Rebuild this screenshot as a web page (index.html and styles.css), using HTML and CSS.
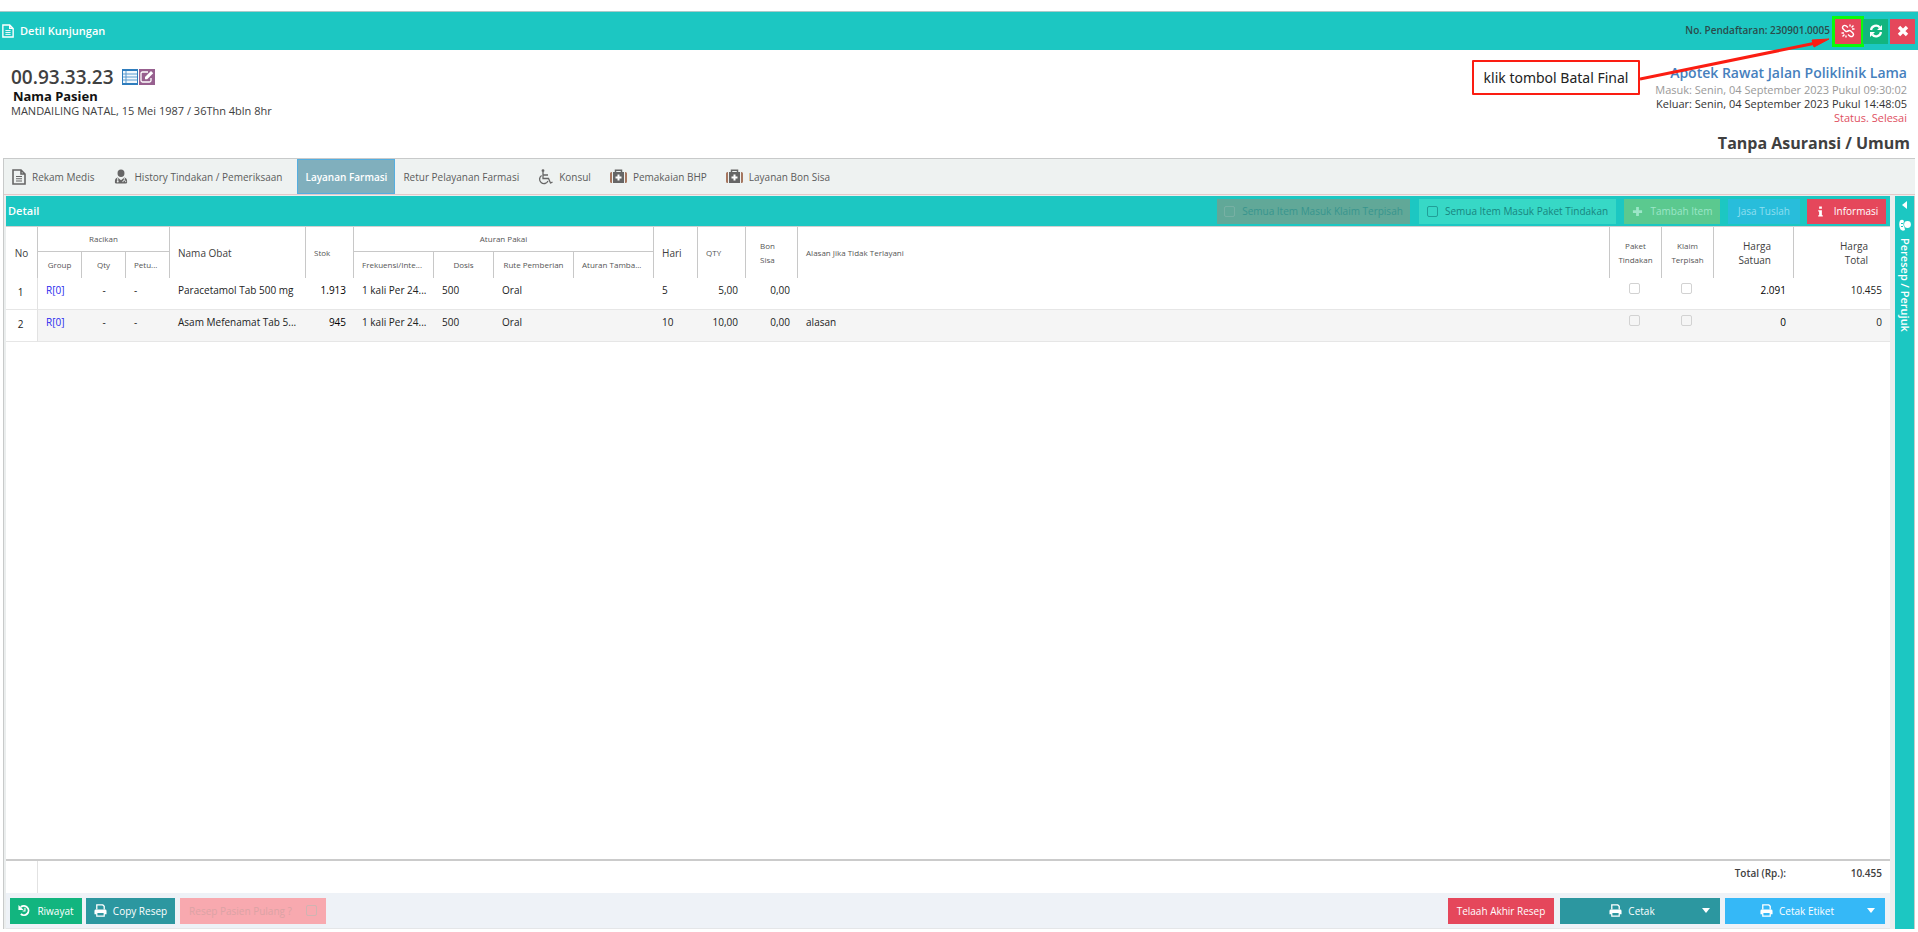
FILE: index.html
```html
<!DOCTYPE html>
<html lang="id">
<head>
<meta charset="utf-8">
<title>Detil Kunjungan</title>
<link rel="stylesheet" href="styles.css">
</head>
<body>
<svg class="defs" aria-hidden="true">
  <symbol id="i-file" viewBox="0 0 14 16"><path d="M1 1h8l4 4v10H1z M9 1v4h4" fill="none" stroke="currentColor" stroke-width="1.6"/><path d="M4 7.5h6M4 9.8h6M4 12h6" stroke="currentColor" stroke-width="1.1"/></symbol>
  <symbol id="i-print" viewBox="0 0 14 14"><path d="M3 6V1h6.500l1.500 1.500V6" fill="none" stroke="currentColor" stroke-width="1.400"/><path d="M2 6h10a1.500 1.500 0 0 1 1.500 1.500V11H11V9H3v2H.5V7.500A1.500 1.500 0 0 1 2 6z" fill="currentColor"/><path d="M3 9h8v4H3z" fill="none" stroke="currentColor" stroke-width="1.300"/></symbol>
  <symbol id="i-kit" viewBox="0 0 17 16"><path d="M0 4.500Q0 3 1.500 3H2v11h-.5Q0 14 0 12.500z M17 4.500Q17 3 15.500 3H15v11h.5Q17 14 17 12.500z" fill="#a5765f"/><path d="M3 3h11v11H3z" fill="currentColor"/><path d="M5.500 3V1.200h6V3" fill="none" stroke="currentColor" stroke-width="1.500"/><path d="M7.500 5.500h2v2h2v2h-2v2h-2v-2h-2v-2h2z" fill="#fff"/></symbol>
</svg>

<header class="titlebar">
  <svg class="ic-title"><use href="#i-file"/></svg>
  <h1>Detil Kunjungan</h1>
  <span class="regno">No. Pendaftaran: 230901.0005</span>
  <div class="tools">
    <button class="tool red marked" aria-label="Batal Final"><svg viewBox="0 0 14 14"><path d="M7 3.500 5 1.800Q3.500.8 2.200 2T2 4.800l2.500 2.400Q6 8.200 7.500 6.500M7 10.500l2 1.700q1.500 1 2.800-.2t.2-2.800L9.500 6.800Q8 5.800 6.500 7.500M9 .5v2M10.500 3.500l2-2M11 5h2.500M5 11.500v2M3.500 10.500l-2 2M3 9H.5" fill="none" stroke="#fff" stroke-width="1.400"/></svg></button>
    <button class="tool green" aria-label="Muat ulang"><svg viewBox="0 0 14 14"><path d="M2 6a5 5 0 0 1 8.800-2.500M12 8a5 5 0 0 1-8.800 2.500" fill="none" stroke="#fff" stroke-width="2.200"/><path d="M13 1v5H8zM1 13V8h5z" fill="#fff"/></svg></button>
    <button class="tool red" aria-label="Tutup"><svg viewBox="0 0 14 14"><path d="m3 3 8 8M11 3l-8 8" stroke="#fff" stroke-width="3.400"/></svg></button>
  </div>
</header>

<section class="patient">
  <div class="who">
    <div class="mr"><strong>00.93.33.23</strong>
      <button class="mini blue" aria-label="Daftar"><svg viewBox="0 0 16 16"><path d="M1 2h14v12H1z" fill="#f3f8fc"/><path d="M1 5h14M1 8h14M1 11h14M4 2v12" stroke="#5b9bd0" stroke-width="1"/></svg></button>
      <button class="mini purple" aria-label="Ubah"><svg viewBox="0 0 16 16"><path d="M9 3H3.500Q2 3 2 4.500v7Q2 13 3.500 13h7q1.500 0 1.500-1.500V9" fill="none" stroke="#fff" stroke-width="1.300"/><path d="m6 8 6-6 2.200 2.200-6 6H6z" fill="#fff"/></svg></button>
    </div>
    <div class="name">Nama Pasien</div>
    <div class="birth">MANDAILING NATAL, 15 Mei 1987 / 36Thn 4bln 8hr</div>
  </div>
  <div class="visit">
    <div class="unit">Apotek Rawat Jalan Poliklinik Lama</div>
    <div class="in">Masuk: Senin, 04 September 2023 Pukul 09:30:02</div>
    <div class="out">Keluar: Senin, 04 September 2023 Pukul 14:48:05</div>
    <div class="status">Status. Selesai</div>
    <div class="payer">Tanpa Asuransi / Umum</div>
  </div>
</section>

<main class="main">
  <nav class="tabs">
    <button class="tab"><svg class="ic-doc"><use href="#i-file"/></svg>Rekam Medis</button>
    <button class="tab history"><svg class="ic-doctor" viewBox="0 0 14 16"><path d="M7 .5a3.500 3.800 0 0 1 0 8 3.500 3.800 0 0 1 0-8zM3.500 9 7 12l3.500-3Q13.500 9.500 13.500 13v1.500Q13.500 15.500 12 15.500H2Q.5 15.500.5 14.500V13Q.5 9.500 3.500 9z" fill="currentColor"/><path d="M3.500 9.500v3M10.500 9.500v2M9 14v-1q1.500-2 3 0v1" fill="none" stroke="#eef2f1"/><circle cx="3.500" cy="13.300" r="1" fill="#eef2f1"/></svg>History Tindakan / Pemeriksaan</button>
    <button class="tab active">Layanan Farmasi</button>
    <button class="tab">Retur Pelayanan Farmasi</button>
    <button class="tab"><svg class="ic-chair" viewBox="0 0 15 16"><circle cx="5" cy="1.700" r="1.400" fill="currentColor"/><path d="M5 3v6.500h5.500L12.500 14l2-.8M5 6h5M3.600 6.500A4.400 4.400 0 1 0 10 12" fill="none" stroke="currentColor" stroke-width="1.300"/></svg>Konsul</button>
    <button class="tab"><svg class="ic-kit"><use href="#i-kit"/></svg>Pemakaian BHP</button>
    <button class="tab"><svg class="ic-kit"><use href="#i-kit"/></svg>Layanan Bon Sisa</button>
  </nav>

  <div class="work">
    <section class="panel">
      <div class="panel-head">
        <h2>Detail</h2>
        <label class="chip klaim"><input type="checkbox" disabled>Semua Item Masuk Klaim Terpisah</label>
        <label class="chip paket"><input type="checkbox" disabled>Semua Item Masuk Paket Tindakan</label>
        <button class="chip tambah" disabled><svg viewBox="0 0 12 12"><path d="M6 1v10M1 6h10" stroke="currentColor" stroke-width="3"/></svg>Tambah Item</button>
        <button class="chip jasa" disabled>Jasa Tuslah</button>
        <button class="chip info"><svg viewBox="0 0 12 12"><path d="M4.500.5h3v2.500h-3zM3.500 4.500h4V10h1v1.500h-5V10h1V6h-1z" fill="#fff"/></svg>Informasi</button>
      </div>
      <div class="grid">
        <table>
          <colgroup><col class="w32"><col class="w44"><col class="w44"><col class="w44"><col class="w136"><col class="w48"><col class="w80"><col class="w60"><col class="w80"><col class="w80"><col class="w44"><col class="w48"><col class="w52"><col><col class="w52"><col class="w52"><col class="w80"><col class="w96"></colgroup>
          <thead>
            <tr><th rowspan="2" class="big c">No</th><th colspan="3" class="grp">Racikan</th><th rowspan="2" class="big">Nama Obat</th><th rowspan="2">Stok</th><th colspan="4" class="grp">Aturan Pakai</th><th rowspan="2" class="big">Hari</th><th rowspan="2">QTY</th><th rowspan="2" class="two">Bon Sisa</th><th rowspan="2">Alasan Jika Tidak Terlayani</th><th rowspan="2" class="c">Paket Tindakan</th><th rowspan="2" class="c">Klaim Terpisah</th><th rowspan="2" class="big r">Harga<br>Satuan</th><th rowspan="2" class="big r last">Harga<br>Total</th></tr>
            <tr class="sub"><th class="c">Group</th><th class="c">Qty</th><th>Petu...</th><th>Frekuensi/Inte...</th><th class="c">Dosis</th><th class="c">Rute Pemberian</th><th>Aturan Tamba...</th></tr>
          </thead>
          <tbody>
            <tr><td class="no">1</td><td><a href="#">R[0]</a></td><td class="c">-</td><td>-</td><td>Paracetamol Tab 500 mg</td><td class="r k">1.913</td><td>1 kali Per 24...</td><td>500</td><td>Oral</td><td></td><td>5</td><td class="r">5,00</td><td class="r">0,00</td><td></td><td class="c"><input type="checkbox" disabled aria-label="Paket tindakan 1"></td><td class="c"><input type="checkbox" disabled aria-label="Klaim terpisah 1"></td><td class="r k">2.091</td><td class="r">10.455</td></tr>
            <tr class="alt"><td class="no">2</td><td><a href="#">R[0]</a></td><td class="c">-</td><td>-</td><td>Asam Mefenamat Tab 5...</td><td class="r k">945</td><td>1 kali Per 24...</td><td>500</td><td>Oral</td><td></td><td>10</td><td class="r">10,00</td><td class="r">0,00</td><td>alasan</td><td class="c"><input type="checkbox" disabled aria-label="Paket tindakan 2"></td><td class="c"><input type="checkbox" disabled aria-label="Klaim terpisah 2"></td><td class="r k">0</td><td class="r">0</td></tr>
          </tbody>
        </table>
      </div>
      <div class="sum"><span class="sum-no"></span><span class="sum-label">Total (Rp.):</span><span class="sum-val">10.455</span></div>
      <div class="actions">
        <button class="act riwayat"><svg viewBox="0 0 14 14"><path d="M3 3.300A5 5 0 1 1 3 10.800" fill="none" stroke="#fff" stroke-width="2"/><path d="M.5 1v5.500H6z" fill="#fff"/><path d="M7.500 4v3.500H5" fill="none" stroke="#fff" stroke-width="1.200"/></svg>Riwayat</button>
        <button class="act copy"><svg><use href="#i-print"/></svg>Copy Resep</button>
        <label class="act pulang">Resep Pasien Pulang ?<input type="checkbox" disabled></label>
        <span class="grow"></span>
        <button class="act telaah">Telaah Akhir Resep</button>
        <button class="act split cetak"><span><svg><use href="#i-print"/></svg>Cetak</span><i class="caret"></i></button>
        <button class="act split etiket"><span><svg><use href="#i-print"/></svg>Cetak Etiket</span><i class="caret"></i></button>
      </div>
    </section>
    <aside class="side">
      <i class="left"></i>
      <svg viewBox="0 0 12 12"><circle cx="8.500" cy="5.500" r="3.400" fill="#fff"/><path d="M1 1.500Q3.500 0 5 2 3.500 5.500 5.500 8.500L6 11Q3.500 12.500 1.500 10.500-.8 6 1 1.500z" fill="#fff"/><path d="M2 4.500h2M2 7.500h2" stroke="#1cc7c2"/></svg>
      <span>Peresep / Perujuk</span>
    </aside>
  </div>
</main>

<div class="callout">klik tombol Batal Final</div>
<svg class="arrow" viewBox="0 0 192 50"><path d="M0 44 176 8" stroke="#fb1d12" stroke-width="3"/><path d="m189 4-15 8-2-7z" fill="#fb1d12" stroke="#fb1d12"/></svg>
</body>
</html>
```

FILE: styles.css
```css
* { box-sizing: border-box; }
body {
  margin: 0;
  padding: 11px 0 3px;
  min-height: 100vh;
  display: flex;
  flex-direction: column;
  position: relative;
  background: #fff;
  color: #404040;
  font: 10px/14px "Open Sans", "Noto Sans", sans-serif;
}
.defs { position: absolute; width: 0; height: 0; }
button { font: inherit; color: inherit; border: 0; padding: 0; background: none; cursor: pointer; }
h1, h2 { margin: 0; font-size: 11px; font-weight: 600; color: #fff; }

/* title bar */
.titlebar {
  display: flex;
  align-items: center;
  height: 39px;
  padding: 0 3px 0 2px;
  background: #1cc7c2;
  border-top: 1px solid #a9c9c9;
}
.ic-title { width: 12px; height: 14px; margin-right: 6px; color: #fff; }
.regno { margin: 0 5px 3px auto; font-weight: 600; color: #2b4b4b; }
.tools { display: flex; gap: 2px; }
.tool { width: 25px; height: 25px; display: grid; place-items: center; }
.tool svg { width: 14px; height: 14px; }
.red { background: #e5475b; }
.green { background: #12b57f; }
.marked { width: 26px; outline: 3px solid #0bfb0b; }

/* patient summary */
.patient {
  display: flex;
  justify-content: space-between;
  height: 108px;
  padding: 14px 8px 0 11px;
  font-size: 11px;
}
.mr { display: flex; align-items: center; height: 25px; }
.mr strong { margin-right: 8px; font-size: 19px; font-weight: 600; }
.mini { width: 16px; height: 16px; margin-right: 1px; }
.mini svg { display: block; width: 16px; height: 16px; }
.blue { background: #2f7dbd; }
.purple { background: #97608f; }
.name { padding-left: 2px; font: 700 13px/14px "Noto Sans", sans-serif; color: #111; }
.birth { line-height: 15px; }
.visit { display: flex; flex-direction: column; text-align: right; line-height: 15px; }
.visit > div { padding-right: 3px; }
.unit { font-size: 14px; font-weight: 600; line-height: 18px; color: #4680bd; }
.in { color: #999; }
.out { color: #333; line-height: 14px; }
.status { color: #e0505f; line-height: 14px; }
.visit .payer { margin-top: 6px; padding-right: 0; font-size: 16px; font-weight: 700; line-height: 24px; }

/* tabs */
.main { flex: 1; display: flex; flex-direction: column; margin: 0 3px; border-left: 1px solid #c8caca; }
.tabs { display: flex; height: 36px; background: #eef2f1; border-top: 1px solid #c8caca; }
.tab { display: flex; align-items: center; padding: 0 11px 0 8px; color: #5c5c5c; }
.tab svg { color: #666; }
.ic-doc { width: 14px; height: 16px; margin-right: 6px; }
.ic-doctor { width: 14px; height: 15px; margin-right: 6px; }
.ic-chair { width: 15px; height: 16px; margin-right: 6px; }
.ic-kit { width: 17px; height: 16px; margin-right: 6px; }
.tab.history { padding-left: 9px; padding-right: 15px; }
.tab.active { padding: 0 7px; color: #fff; font-weight: 600; background: #80afbd; border: 1px solid #55aee0; }

/* work area */
.work { flex: 1; display: flex; gap: 5px; padding-left: 2px; background: #ebeeee; border-top: 1px solid #e5c8c8; }
.panel { flex: 1; min-width: 0; display: flex; flex-direction: column; margin-top: 1px; }
.panel-head { display: flex; align-items: center; height: 30px; padding: 0 4px 0 2px; background: #1cc7c2; }
.panel-head h2 { margin-right: auto; }
.chip { display: flex; align-items: center; justify-content: center; height: 25px; white-space: nowrap; }
.chip svg { width: 11px; height: 11px; margin-right: 8px; }
.chip input { margin: 0 7px 0 0; }
.klaim { width: 193px; margin-right: 9px; background: #61a898; color: #38958e; }
.klaim input { opacity: .2; }
.paket { width: 197px; margin-right: 8px; background: #37d8c6; color: #19857f; }
.tambah { width: 96px; margin-right: 8px; background: #5bc98f; color: #9ce6c8; }
.jasa { width: 72px; margin-right: 7px; background: #28bddb; color: #8fdff0; }
.info { width: 79px; background: #e5475b; color: #fff; }
input[type="checkbox"] {
  appearance: none;
  width: 11px;
  height: 11px;
  border: 1px solid #d2d2d2;
  border-radius: 2px;
  background: transparent;
}
.chip.paket input { border-color: #219f98; }

/* medicine grid */
.grid { flex: 1; background: #fff; border-top: 1px solid #d0d0d0; }
table { width: 100%; table-layout: fixed; border-collapse: separate; border-spacing: 0; }
.w32 { width: 32px; } .w44 { width: 44px; } .w48 { width: 48px; } .w52 { width: 52px; }
.w60 { width: 60px; } .w80 { width: 80px; } .w96 { width: 96px; } .w136 { width: 136px; }
th {
  height: 25px;
  padding: 0 0 0 8px;
  font-size: 8px;
  font-weight: 400;
  color: #555;
  text-align: left;
  white-space: nowrap;
  border-right: 1px solid #c8c8c8;
}
.sub th { height: 26px; }
th[rowspan] { white-space: normal; }
th.grp { text-align: center; padding: 0; border-bottom: 1px solid #c8c8c8; }
th.big { font-size: 10px; color: #404040; }
th.r { padding-right: 22px; text-align: right; }
th.c, td.c { padding-left: 0; padding-right: 0; text-align: center; }
th.two { padding: 0 14px; }
th.last { border-right: 0; }
td {
  height: 32px;
  padding: 5px 6px 0 8px;
  vertical-align: top;
  white-space: nowrap;
  color: #222;
  border-bottom: 1px solid #e6e6e6;
}
td.no { padding: 7px 2px 0 0; text-align: center; background: #fff; border-right: 1px solid #e2e2e2; }
td.r { text-align: right; padding-left: 0; padding-right: 8px; }
td.k { color: #000; }
td a { color: #2a2aee; text-decoration: none; }
td input { margin: 0 3px 0 0; }
.alt { background: #f5f5f5; }

.sum { display: flex; height: 34px; background: #fff; border-top: 2px solid #cbcbcb; font-weight: 600; line-height: 24px; }
.sum-no { width: 32px; border-right: 1px solid #e2e2e2; }
.sum-label { margin-left: auto; padding-right: 8px; }
.sum-val { width: 96px; padding-right: 8px; text-align: right; }

.actions { display: flex; align-items: center; height: 36px; padding: 0 5px 0 4px; background: #eef2f7; border-bottom: 1px solid #e4e6e8; }
.grow { flex: 1; }
.act { display: flex; align-items: center; justify-content: center; height: 26px; color: #fff; }
.act svg { width: 13px; height: 13px; margin-right: 6px; }
.riwayat { width: 72px; margin-right: 4px; background: #12b57f; }
.copy { width: 89px; margin-right: 5px; background: #2c97a0; }
.pulang { width: 146px; background: #f8a9af; color: #dba3a5; }
.pulang input { margin: 0 0 0 14px; }
.act.pulang input { border-color: #d0b4b2; }
.telaah { width: 106px; margin-right: 6px; background: #e5475b; }
.split { width: 160px; padding: 0 10px; }
.split span { flex: 1; display: flex; align-items: center; justify-content: center; padding-right: 8px; }
.cetak { margin-right: 5px; background: #2c97a0; }
.etiket { background: #35b8f7; }
.caret { border: 4px solid transparent; border-top: 5px solid #fff; border-bottom: 0; }

/* collapsed side panel */
.side { width: 20px; display: flex; flex-direction: column; align-items: center; padding-top: 5px; margin-top: 1px; background: #1cc7c2; border-right: 1px solid #c8caca; color: #fff; font-weight: 600; }
.left { border: 4px solid transparent; border-right: 5px solid #fff; border-left: 0; }
.side svg { width: 12px; height: 12px; margin: 10px 0 7px; }
.side span { writing-mode: vertical-rl; font-size: 11px; }

/* annotation */
.callout {
  position: absolute;
  top: 60px;
  right: 278px;
  width: 168px;
  height: 35px;
  display: grid;
  place-items: center;
  border: 2px solid #fb1d12;
  border-radius: 1px;
  background: #fff;
  color: #222;
  font: 14px/18px "Noto Sans", sans-serif;
}
.arrow { position: absolute; top: 35px; right: 86px; width: 192px; height: 50px; }
```
